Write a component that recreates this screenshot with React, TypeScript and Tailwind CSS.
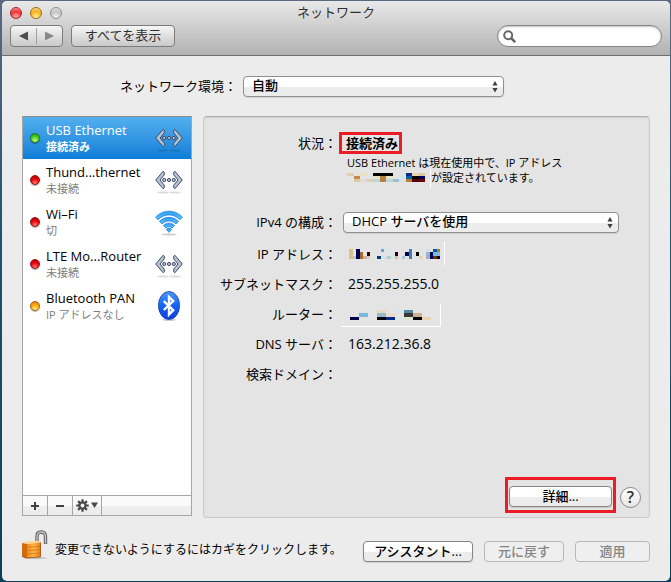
import { ReactNode, useState } from "react";

type Status = "green" | "red" | "yellow";

type Service = {
  name: string;
  detail: string;
  status: Status;
  icon: "ethernet" | "wifi" | "bluetooth";
};

type Cell = [x: number, y: number, w: number, h: number, fill: string];

const services: Service[] = [
  { name: "USB Ethernet", detail: "接続済み", status: "green", icon: "ethernet" },
  { name: "Thund...thernet", detail: "未接続", status: "red", icon: "ethernet" },
  { name: "Wi–Fi", detail: "切", status: "red", icon: "wifi" },
  { name: "LTE Mo...Router", detail: "未接続", status: "red", icon: "ethernet" },
  {
    name: "Bluetooth PAN",
    detail: "IP アドレスなし",
    status: "yellow",
    icon: "bluetooth",
  },
];

const statusColors: Record<Status, string> = {
  green:
    "border-[#1c7a1c] bg-[radial-gradient(circle_at_50%_85%,#c8ff70,#3fc71c_60%,#239416)]",
  red: "border-[#8e0f0f] bg-[radial-gradient(circle_at_50%_90%,#ff7a6a,#e6000c_55%,#b80008)]",
  yellow:
    "border-[#a85a08] bg-[radial-gradient(circle_at_50%_90%,#fff27a,#fba514_55%,#dd7a08)]",
};

// Pixelated blocks that hide the private addresses
const statusCells: Cell[] = [
  [0, 0, 7, 3, "#e0cfae"],
  [7, 3, 6, 3, "#c08a4a"],
  [7, 6, 6, 3, "#ddc9a0"],
  [13, 0, 7, 3, "#ebe0bd"],
  [13, 6, 7, 3, "#e4dad4"],
  [20, 3, 6, 3, "#dde5e5"],
  [20, 6, 6, 3, "#e0cdb4"],
  [26, 0, 20, 3, "#000000"],
  [26, 3, 7, 3, "#e5e3c8"],
  [26, 6, 7, 3, "#bcd4dc"],
  [33, 3, 6, 6, "#b5813c"],
  [39, 3, 7, 3, "#e5e3c8"],
  [39, 6, 7, 3, "#bcd4dc"],
  [46, 6, 6, 3, "#9cbcd6"],
  [52, 0, 7, 9, "#d8e4e6"],
  [59, 0, 6, 3, "#0a2a80"],
  [59, 3, 6, 3, "#0062a8"],
  [59, 6, 6, 3, "#b8803a"],
  [65, 0, 7, 3, "#e5d5b5"],
  [65, 3, 7, 3, "#000000"],
  [65, 6, 7, 3, "#500000"],
  [72, 0, 6, 3, "#dcc7a0"],
  [72, 3, 6, 3, "#000060"],
  [72, 6, 6, 3, "#700010"],
  [83, -3, 1, 18, "#ffffff"],
];

const addressCells: Cell[] = [
  [1, 0, 4, 10, "#d9c08d"],
  [5, 7, 3, 3, "#c9c8cc"],
  [8, 0, 4, 10, "#00005a"],
  [12, 3, 3, 7, "#a06a28"],
  [15, 7, 4, 3, "#ceb09c"],
  [19, 3, 3, 4, "#300000"],
  [19, 7, 3, 3, "#dcc8c0"],
  [29, 7, 4, 3, "#003a7a"],
  [33, 0, 3, 3, "#62a4d0"],
  [36, 0, 7, 3, "#d8e6e8"],
  [33, 7, 6, 3, "#d8e0e0"],
  [39, 7, 4, 3, "#b8ccc8"],
  [43, 3, 4, 7, "#d8e6e8"],
  [47, 3, 3, 4, "#300000"],
  [47, 7, 3, 3, "#d0c0a0"],
  [54, 7, 3, 3, "#a8c8dc"],
  [57, 3, 4, 4, "#00004a"],
  [61, 0, 3, 10, "#3a80c0"],
  [68, 3, 3, 4, "#000000"],
  [71, 7, 4, 3, "#e6d6b0"],
  [78, 0, 4, 3, "#d0e4e8"],
  [78, 3, 4, 7, "#98b4c8"],
  [82, 3, 3, 7, "#00005a"],
  [85, 0, 4, 3, "#005aa0"],
  [85, 3, 4, 4, "#80b8dc"],
  [85, 7, 4, 3, "#6a3000"],
  [89, 0, 3, 3, "#b57a30"],
  [89, 3, 3, 4, "#80b8dc"],
  [89, 7, 3, 3, "#00004a"],
  [96, -7, 1, 23, "#ffffff"],
];

const routerCells: Cell[] = [
  [2, 8, 9, 3, "#00004a"],
  [11, 4, 9, 4, "#7ab8dc"],
  [29, 1, 9, 3, "#e8dcb8"],
  [29, 4, 9, 4, "#98b8d0"],
  [29, 8, 9, 3, "#000000"],
  [38, 4, 9, 4, "#e8dcc8"],
  [38, 8, 9, 3, "#002a88"],
  [47, 1, 9, 3, "#d8e6e8"],
  [47, 8, 9, 3, "#d8e8ea"],
  [56, 1, 9, 3, "#5088a0"],
  [56, 4, 9, 4, "#383838"],
  [56, 8, 9, 3, "#e4e4cc"],
  [65, 4, 9, 4, "#ceb090"],
  [65, 8, 9, 3, "#000000"],
  [74, 8, 9, 3, "#e6d6b0"],
  [92, -5, 1, 22, "#ffffff"],
  [-7, 17, 100, 1, "#ffffff"],
];

function Mosaic({ cells, width }: { cells: Cell[]; width: number }) {
  return (
    <svg
      width={width}
      height={10}
      viewBox={`0 0 ${width} 10`}
      shapeRendering="crispEdges"
      className="shrink-0 overflow-visible"
      aria-hidden="true">
      {cells.map(([x, y, w, h, fill], i) => (
        <rect key={i} x={x} y={y} width={w} height={h} fill={fill} />
      ))}
    </svg>
  );
}

function EthernetIcon() {
  return (
    <svg width="28" height="30" viewBox="0 0 28 30" aria-hidden="true">
      <ellipse cx="8" cy="27.500" rx="6" ry=".9" fill="#000" opacity=".14" />
      <ellipse cx="20" cy="27.500" rx="6" ry=".9" fill="#000" opacity=".14" />
      <g fill="#b4c2d4" stroke="#3f4c66" strokeLinejoin="round">
        <path d="M.7 15 8.200 6.200 9.300 7.200V9.800L5 15l4.300 5.200v2.600L8.200 23.800z" />
        <path d="M27.300 15 19.800 6.200 18.700 7.200V9.800L23 15l-4.300 5.200v2.600l1.100 1z" />
        <circle cx="9.200" cy="15" r="1.600" />
        <circle cx="14" cy="15" r="1.600" />
        <circle cx="18.800" cy="15" r="1.600" />
      </g>
    </svg>
  );
}

function WifiIcon() {
  return (
    <svg width="28" height="30" viewBox="0 0 28 30" aria-hidden="true">
      <defs>
        <linearGradient id="wifi" x1="0" y1="0" x2="0" y2="1">
          <stop offset="0" stopColor="#2f9cf2" />
          <stop offset="1" stopColor="#58c4ff" />
        </linearGradient>
      </defs>
      <ellipse cx="14" cy="27.500" rx="8" ry="1.200" fill="#000" opacity=".18" />
      <g fill="url(#wifi)" stroke="#1273d2" strokeWidth=".7" strokeLinejoin="round">
        <path d="M.5 10.200C8 2.200 20 2.200 27.500 10.200l-2.600 2.500C18.700 6.300 9.300 6.300 3.100 12.700z" />
        <path d="M4.500 14.400c5.300-5.400 13.700-5.400 19 0l-2.500 2.500c-3.900-3.900-10.100-3.900-14 0z" />
        <path d="M8.400 18.500c3.100-3.100 8.100-3.100 11.200 0l-2.500 2.500c-1.700-1.700-4.500-1.700-6.200 0z" />
        <path d="M11.300 22.400c1.500-1.400 3.900-1.400 5.400 0L14 25.400z" />
      </g>
    </svg>
  );
}

function BluetoothIcon() {
  return (
    <svg width="28" height="30" viewBox="0 0 28 30" aria-hidden="true">
      <defs>
        <linearGradient id="bluetooth" x1="0" y1="0" x2="0" y2="1">
          <stop offset="0" stopColor="#4a9af6" />
          <stop offset=".5" stopColor="#1464f4" />
          <stop offset="1" stopColor="#0c3ee0" />
        </linearGradient>
      </defs>
      <ellipse cx="14" cy="28.800" rx="7" ry="1.200" fill="#000" opacity=".2" />
      <ellipse
        cx="14"
        cy="14.500"
        rx="10.600"
        ry="14"
        fill="url(#bluetooth)"
        stroke="#1c3fae"
        strokeWidth=".8"
      />
      <path
        d="m8.800 10.200 9.400 9-4.200 4.300V6l4.200 4-9.400 9"
        fill="none"
        stroke="#fff"
        strokeWidth="2.400"
      />
    </svg>
  );
}

const serviceIcons = {
  ethernet: <EthernetIcon />,
  wifi: <WifiIcon />,
  bluetooth: <BluetoothIcon />,
};

function LockIcon() {
  return (
    <svg
      width="26"
      height="30"
      viewBox="0 0 26 30"
      className="mb-[2px] shrink-0"
      aria-hidden="true">
      <defs>
        <linearGradient id="brass" x1="0" y1="0" x2="1" y2="0">
          <stop offset="0" stopColor="#ee8a1e" />
          <stop offset=".5" stopColor="#ffb648" />
          <stop offset="1" stopColor="#e87c10" />
        </linearGradient>
      </defs>
      <ellipse cx="13" cy="28" rx="12" ry="1.200" fill="#000" opacity=".18" />
      <path
        d="M15 13.500V6.500C15 3.500 16.500 2 19.200 2s4.300 1.500 4.300 5v7"
        fill="none"
        stroke="#5e5e5e"
        strokeWidth="3.400"
      />
      <path
        d="M15 13V6.500C15 3.500 16.500 2 19.200 2s4.300 1.500 4.300 5v6.500"
        fill="none"
        stroke="#c8c8c8"
        strokeWidth="1.400"
      />
      <path d="M0 13 5 11h13.500v1.500L5 14z" fill="#ffd998" />
      <path d="M0 13 5 14v14l-5-1.500z" fill="#d06a10" />
      <path d="M5 14 18.500 12.500v14.300L5 28z" fill="url(#brass)" />
      <path
        d="M0 16.500l5 .8 13.500-1M0 20l5 .6 13.500-1M0 23.200l5 .8 13.500-1"
        fill="none"
        stroke="#d2700e"
        strokeWidth=".7"
      />
      <path
        d="M0 26.500 5 28l13.500-1.200V12.500"
        fill="none"
        stroke="#a04c08"
        strokeWidth=".8"
      />
    </svg>
  );
}

function GearIcon() {
  return (
    <svg width="13" height="13" viewBox="0 0 13 13" aria-hidden="true">
      <path
        d="M6.500.2v12.600M.2 6.500h12.600M2.100 2.100l8.800 8.800M10.900 2.100l-8.800 8.800"
        stroke="#4a4a4a"
        strokeWidth="2.200"
      />
      <circle cx="6.500" cy="6.500" r="4.200" fill="#4a4a4a" />
      <circle cx="6.500" cy="6.500" r="1.900" fill="#f2f2f2" />
    </svg>
  );
}

type PopupProps = {
  id: string;
  options: string[];
  className: string;
};

function Popup({ id, options, className }: PopupProps) {
  return (
    <div className={`relative ${className}`}>
      <select
        id={id}
        className="block h-[21px] w-full appearance-none rounded-[4px] border border-[#8f8f8f] bg-linear-to-b from-white from-50% to-[#ececec] to-55% pr-5 pb-[2px] pl-2 text-[13px] leading-[17px] font-medium text-black shadow-[0_1px_1px_rgba(0,0,0,0.1)]">
        {options.map((option) => (
          <option key={option}>{option}</option>
        ))}
      </select>
      <svg
        width="6"
        height="12"
        viewBox="0 0 6 12"
        fill="#404040"
        className="pointer-events-none absolute top-[5px] right-[6px]"
        aria-hidden="true">
        <path d="M3 0 5.600 4.500H.4zM3 11.500.4 7h5.200z" />
      </svg>
    </div>
  );
}

type PushButtonProps = {
  children: ReactNode;
  className: string;
  disabled?: boolean;
};

function PushButton({ children, className, disabled }: PushButtonProps) {
  return (
    <button
      type="button"
      disabled={disabled}
      className={`h-[21px] rounded-[4px] border pb-px text-center text-[13px] leading-[18px] font-medium whitespace-nowrap ${
        disabled
          ? "border-[#b8b8b8] bg-[#efefef] text-[#858585]"
          : "border-[#858585] bg-linear-to-b from-white from-50% to-[#ececec] to-55% text-black shadow-[0_1px_1px_rgba(0,0,0,0.12)]"
      } ${className}`}>
      {children}
    </button>
  );
}

function Row({ label, children }: { label: string; children?: ReactNode }) {
  return (
    <div className="flex h-[30px] items-center gap-[2px]">
      <dt className="w-[133px] shrink-0 text-right">{label}</dt>
      <dd className="pl-[9px] text-sm">{children}</dd>
    </div>
  );
}

function TitleBar() {
  return (
    <header className="border-b border-[#6e6e6e] bg-linear-to-b from-[#e9e9e9] to-[#b2b2b2] px-2 pb-2">
      <div className="grid h-6 grid-cols-[1fr_auto_1fr] items-center">
        <div className="flex gap-2">
          <button
            type="button"
            aria-label="閉じる"
            className="size-3 rounded-full border border-[#a02020] bg-[radial-gradient(circle_at_50%_90%,#ffb0a8,#ee3338_55%,#ffb5b5)]"
          />
          <button
            type="button"
            aria-label="しまう"
            className="size-3 rounded-full border border-[#a06c10] bg-[radial-gradient(circle_at_50%_90%,#fff8a0,#f5b01c_55%,#ffe7ac)]"
          />
          <button
            type="button"
            aria-label="拡大"
            className="size-3 rounded-full border border-[#8c8c8c] bg-[radial-gradient(circle_at_50%_90%,#f0f0f0,#c4c4c4_55%,#e8e8e8)]"
          />
        </div>
        <h1 className="pb-[3px] text-[13px] text-[#303030]">ネットワーク</h1>
      </div>
      <div className="flex h-[22px]">
        <div className="flex w-[53px] items-center rounded-[4px] border border-[#7c7c7c] bg-linear-to-b from-[#f6f6f6] to-[#c9c9c9]">
          <button type="button" aria-label="戻る" className="flex flex-1 justify-center">
            <svg width="9" height="10" viewBox="0 0 9 10" fill="#4c4c4c">
              <path d="M0 5 9 .5v9z" />
            </svg>
          </button>
          <span className="h-4 w-px bg-[#a0a0a0]" />
          <button type="button" aria-label="進む" className="flex flex-1 justify-center">
            <svg width="9" height="10" viewBox="0 0 9 10" fill="#888">
              <path d="M9 5 0 .5v9z" />
            </svg>
          </button>
        </div>
        <button
          type="button"
          className="ml-2 w-[104px] rounded-[4px] border border-[#7c7c7c] bg-linear-to-b from-[#f6f6f6] to-[#c9c9c9] pb-px text-[13px] leading-[19px] text-[#303030]">
          すべてを表示
        </button>
        <label className="ml-auto flex w-[165px] items-center rounded-full border border-[#858585] bg-white pl-[5px] shadow-[inset_0_1px_2px_rgba(0,0,0,0.25)]">
          <svg
            width="13"
            height="13"
            viewBox="0 0 13 13"
            fill="none"
            stroke="#666"
            strokeWidth="2"
            aria-hidden="true">
            <circle cx="5.200" cy="5.200" r="4" />
            <path d="m8.200 8.200 4 4" strokeWidth="2.600" />
          </svg>
          <input
            type="search"
            aria-label="検索"
            className="min-w-0 flex-1 bg-transparent px-1 text-[13px] outline-none"
          />
        </label>
      </div>
    </header>
  );
}

function Sidebar() {
  const [selected, setSelected] = useState("USB Ethernet");

  return (
    <nav className="mb-[2px] flex w-[170px] shrink-0 flex-col border border-[#a6a6a6] border-t-[#8c8c8c] bg-white">
      <ul className="flex-1">
        {services.map((service) => {
          const active = service.name === selected;
          return (
            <li key={service.name}>
              <button
                type="button"
                onClick={() => setSelected(service.name)}
                className={`flex h-[42px] w-full items-center pr-2 pl-[7px] text-left ${
                  active
                    ? "bg-linear-to-b from-[#52b0ee] to-[#0a7ed8] text-white"
                    : "text-black"
                }`}>
                <span
                  className={`size-[10px] shrink-0 rounded-full border shadow-[0_1px_1px_rgba(0,0,0,0.3)] ${statusColors[service.status]}`}
                />
                <span className="ml-[6px] flex-1 whitespace-nowrap">
                  <span
                    className={`block text-[13px] leading-[18px] ${active ? "font-medium" : ""}`}>
                    {service.name}
                  </span>
                  <span
                    className={`block text-[11px] leading-4 ${
                      active ? "font-bold" : "text-[#808080]"
                    }`}>
                    {service.detail}
                  </span>
                </span>
                {serviceIcons[service.icon]}
              </button>
            </li>
          );
        })}
      </ul>
      <div className="flex h-5 border-t border-[#a6a6a6] bg-linear-to-b from-[#fafafa] from-50% to-[#ededed] to-55%">
        <button
          type="button"
          aria-label="追加"
          className="flex w-[25px] items-center justify-center border-r border-[#a6a6a6]">
          <svg width="8" height="8" viewBox="0 0 8 8" stroke="#404040" strokeWidth="2">
            <path d="M4 0v8M0 4h8" />
          </svg>
        </button>
        <button
          type="button"
          aria-label="削除"
          className="flex w-[25px] items-center justify-center border-r border-[#a6a6a6]">
          <svg width="8" height="8" viewBox="0 0 8 8" stroke="#404040" strokeWidth="2">
            <path d="M0 4h8" />
          </svg>
        </button>
        <button
          type="button"
          aria-label="アクション"
          className="flex w-[29px] items-center justify-center gap-[2px] border-r border-[#a6a6a6]">
          <GearIcon />
          <svg width="7" height="7" viewBox="0 0 7 7" fill="#4a4a4a">
            <path d="M0 .5h7L3.500 6z" />
          </svg>
        </button>
      </div>
    </nav>
  );
}

function DetailPanel() {
  return (
    <section className="flex flex-1 flex-col rounded-[4px] border border-[#cacaca] border-t-[#b0b0b0] bg-[#e4e4e4] pt-[15px] pb-1 shadow-[inset_0_1px_1px_rgba(0,0,0,0.08)]">
      <div className="flex items-center gap-[2px]">
        <span className="w-[133px] shrink-0 text-right">状況：</span>
        <strong className="h-[22px] border-3 border-[#ed1c24] pr-px pl-1 leading-4 font-bold">
          接続済み
        </strong>
      </div>
      <div className="mt-px pl-[143px] text-[11px] leading-[15px]">
        <p>USB Ethernet は現在使用中で、IP アドレス</p>
        <p className="flex items-center">
          <Mosaic cells={statusCells} width={84} />
          が設定されています。
        </p>
      </div>
      <div className="mt-[27px] flex items-center gap-[6px]">
        <label htmlFor="ipv4" className="w-[133px] shrink-0 pb-px text-right">
          IPv4 の構成：
        </label>
        <Popup
          id="ipv4"
          className="w-[276px]"
          options={["DHCP サーバを使用", "手入力", "切"]}
        />
      </div>
      <dl className="mt-[6px]">
        <Row label="IP アドレス：">
          <Mosaic cells={addressCells} width={96} />
        </Row>
        <Row label="サブネットマスク：">255.255.255.0</Row>
        <Row label="ルーター：">
          <Mosaic cells={routerCells} width={96} />
        </Row>
        <Row label="DNS サーバ：">163.212.36.8</Row>
        <Row label="検索ドメイン：" />
      </dl>
      <div className="mt-auto flex items-center justify-end gap-1 pr-2">
        <div className="border-3 border-[#ed1c24] px-px pt-[6px] pb-[3px]">
          <PushButton className="block w-[103px]">詳細...</PushButton>
        </div>
        <button
          type="button"
          aria-label="ヘルプ"
          className="mt-1 size-[21px] rounded-full border border-[#858585] bg-linear-to-b from-white to-[#e6e6e6] text-base leading-[19px] font-semibold text-[#303030]">
          ?
        </button>
      </div>
    </section>
  );
}

export default function App() {
  return (
    <div className="flex min-h-screen flex-col bg-linear-to-b from-[#5c6880] via-[#1c5572] via-40% to-[#0c3f58] pt-px pr-px pb-px pl-[2px] font-['Open_Sans','Noto_Sans_CJK_JP',sans-serif] text-[13px] leading-4 text-black">
      <div className="flex flex-1 flex-col overflow-hidden rounded-[5px] bg-[#ececec]">
        <TitleBar />
        <main className="flex flex-1 flex-col px-5 pt-5 pb-[19px]">
          <div className="flex items-center gap-[6px] pl-[98px]">
            <label htmlFor="location" className="pb-[2px]">
              ネットワーク環境：
            </label>
            <Popup
              id="location"
              className="w-[261px]"
              options={["自動", "ネットワーク環境を編集..."]}
            />
          </div>
          <div className="mt-[19px] flex flex-1 gap-[11px]">
            <Sidebar />
            <DetailPanel />
          </div>
          <footer className="mt-3 flex items-end">
            <LockIcon />
            <p className="mb-1 ml-[7px] text-xs whitespace-nowrap">
              変更できないようにするにはカギをクリックします。
            </p>
            <div className="ml-auto flex gap-[11px]">
              <PushButton className="w-[110px]">アシスタント...</PushButton>
              <PushButton className="w-[80px]" disabled>
                元に戻す
              </PushButton>
              <PushButton className="w-[75px]" disabled>
                適用
              </PushButton>
            </div>
          </footer>
        </main>
      </div>
    </div>
  );
}
